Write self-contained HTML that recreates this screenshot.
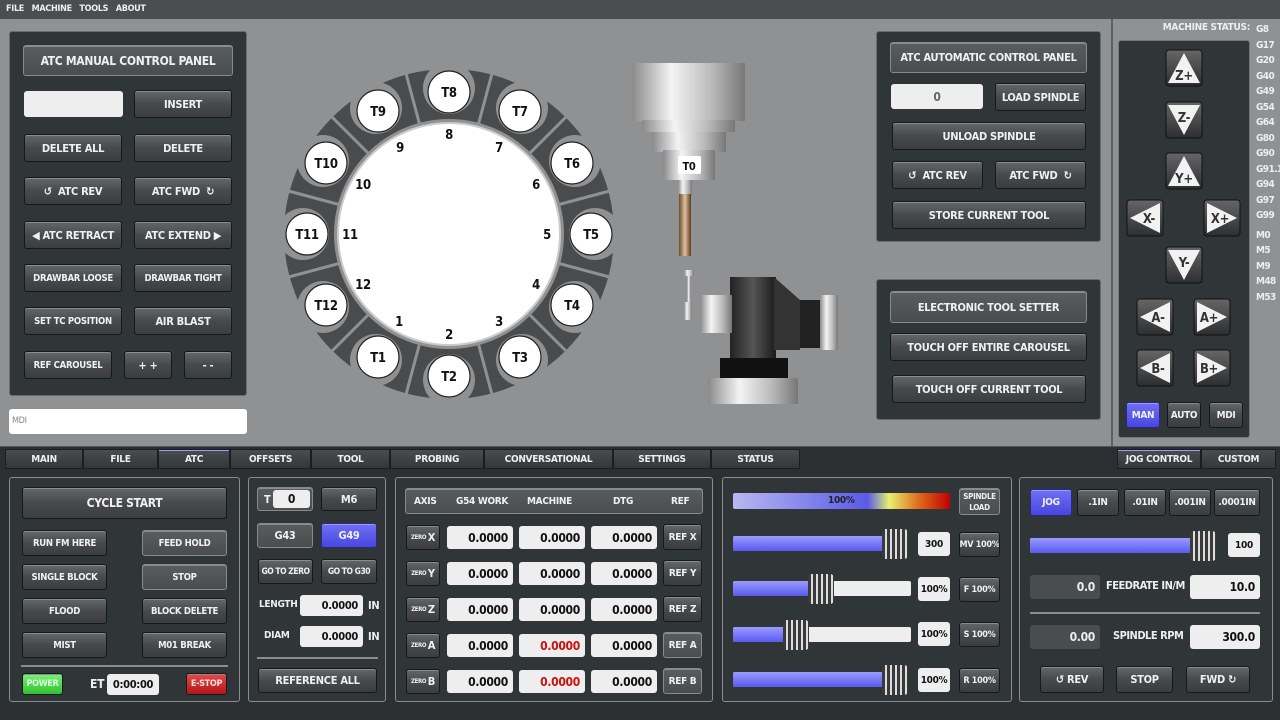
<!DOCTYPE html>
<html><head><meta charset="utf-8"><style>
*{box-sizing:border-box;margin:0;padding:0}
body{width:1280px;height:720px;position:relative;overflow:hidden;background:#8f9192;font-family:"DejaVu Sans Condensed","Liberation Sans Narrow","Liberation Sans",sans-serif;font-weight:bold;color:#eee;letter-spacing:-0.3px}
.a{position:absolute}
.b{position:absolute;background:linear-gradient(#646769,#47494b 50%,#3b3d3f);border:1px solid #161819;border-radius:3px;color:#f0f0f0;display:flex;align-items:center;justify-content:center;font-size:11px;box-shadow:inset 0 1px 0 #8a8c8e;white-space:nowrap;overflow:hidden}
.t{background:linear-gradient(#5a5d5f,#4a4c4e);border:1px solid #888b8d}
.bl{background:linear-gradient(#6f6ff5,#4747e0);border-color:#2a2a80;box-shadow:inset 0 1px 0 #9a9aff}
.p{position:absolute;background:#303537;border:1px solid #6a6d6f;border-radius:3px}
.i{position:absolute;background:#eeeeee;border-radius:3px;color:#111;display:flex;align-items:center;justify-content:flex-end;padding-right:5px;font-size:12px}
.d{position:absolute;background:#4a4d4f;border-radius:3px;color:#eee;display:flex;align-items:center;justify-content:flex-end;padding-right:5px;font-size:12px}
.l{position:absolute;font-size:11px;color:#eee;white-space:nowrap}
.tab{position:absolute;top:449px;height:20px;background:linear-gradient(#4a4d4f,#34373a);border:1px solid #1b1d1e;color:#eee;font-size:10px;display:flex;align-items:center;justify-content:center}
.tr{position:absolute;height:15px;background:#eee;border-radius:2px;overflow:hidden}
.tr i{position:absolute;left:0;top:0;bottom:0;background:linear-gradient(#9a9aff,#5a5af0)}
.h{position:absolute;height:30px;width:26px;background:repeating-linear-gradient(90deg,#3a3a3a 0 3px,#ddd 3px 5px);border-radius:4px}
.s{font-size:9.5px}
</style></head><body>
<div class="a" style="left:0;top:0;width:1280px;height:19px;background:#4b4e50"></div>
<div class="l" style="left:6px;top:4px;font-size:9px">FILE&nbsp;&nbsp; MACHINE&nbsp;&nbsp; TOOLS&nbsp;&nbsp; ABOUT</div>
<div class="a" style="left:1111px;top:19px;width:2px;height:427px;background:#5d6062"></div>

<div class="p" style="left:9px;top:31px;width:238px;height:365px"></div>
<div class="b t" style="left:23px;top:45px;width:210px;height:31px;font-size:12px">ATC MANUAL CONTROL PANEL</div>
<div class="i" style="left:24px;top:91px;width:99px;height:26px"></div>
<div class="b" style="left:134px;top:90px;width:98px;height:28px">INSERT</div>
<div class="b" style="left:24px;top:134px;width:98px;height:28px">DELETE ALL</div>
<div class="b" style="left:134px;top:134px;width:98px;height:28px">DELETE</div>
<div class="b" style="left:24px;top:177px;width:98px;height:28px">↺&nbsp; ATC REV</div>
<div class="b" style="left:134px;top:177px;width:98px;height:28px">ATC FWD&nbsp; ↻</div>
<div class="b" style="left:24px;top:221px;width:98px;height:28px">◀&nbsp;ATC RETRACT</div>
<div class="b" style="left:134px;top:221px;width:98px;height:28px">ATC EXTEND&nbsp;▶</div>
<div class="b s" style="left:24px;top:264px;width:98px;height:28px">DRAWBAR LOOSE</div>
<div class="b s" style="left:134px;top:264px;width:98px;height:28px">DRAWBAR TIGHT</div>
<div class="b s" style="left:24px;top:307px;width:98px;height:28px">SET TC POSITION</div>
<div class="b" style="left:134px;top:307px;width:98px;height:28px">AIR BLAST</div>
<div class="b s" style="left:24px;top:351px;width:88px;height:28px">REF CAROUSEL</div>
<div class="b" style="left:124px;top:351px;width:48px;height:28px">+ +</div>
<div class="b" style="left:184px;top:351px;width:48px;height:28px">- -</div>
<div class="a" style="left:9px;top:409px;width:238px;height:25px;background:#fff;border-radius:3px;color:#888;font-size:9px;padding:7px 3px;font-weight:normal">MDI</div>

<svg class="a" style="left:0;top:0" width="860" height="446" font-family="DejaVu Sans Condensed,Liberation Sans,sans-serif" font-weight="bold">
<circle cx="449" cy="234" r="140" fill="none" stroke="#4a4b4c" stroke-width="50"/>
<g stroke="#8f9192" stroke-width="3">
<line x1="449" y1="234" x2="449" y2="65" transform="rotate(15 449 234)"/><line x1="449" y1="234" x2="449" y2="65" transform="rotate(45 449 234)"/><line x1="449" y1="234" x2="449" y2="65" transform="rotate(75 449 234)"/><line x1="449" y1="234" x2="449" y2="65" transform="rotate(105 449 234)"/><line x1="449" y1="234" x2="449" y2="65" transform="rotate(135 449 234)"/><line x1="449" y1="234" x2="449" y2="65" transform="rotate(165 449 234)"/><line x1="449" y1="234" x2="449" y2="65" transform="rotate(195 449 234)"/><line x1="449" y1="234" x2="449" y2="65" transform="rotate(225 449 234)"/><line x1="449" y1="234" x2="449" y2="65" transform="rotate(255 449 234)"/><line x1="449" y1="234" x2="449" y2="65" transform="rotate(285 449 234)"/><line x1="449" y1="234" x2="449" y2="65" transform="rotate(315 449 234)"/><line x1="449" y1="234" x2="449" y2="65" transform="rotate(345 449 234)"/>
</g>
<circle cx="449" cy="234" r="111" fill="#fff" stroke="#ccc" stroke-width="2"/>
<g fill="#8f9192">
<circle cx="449" cy="88" r="26"/><circle cx="522" cy="108" r="26"/><circle cx="575" cy="161" r="26"/><circle cx="595" cy="234" r="26"/><circle cx="575" cy="307" r="26"/><circle cx="522" cy="360" r="26"/><circle cx="449" cy="380" r="26"/><circle cx="376" cy="360" r="26"/><circle cx="323" cy="307" r="26"/><circle cx="303" cy="234" r="26"/><circle cx="323" cy="161" r="26"/><circle cx="376" cy="108" r="26"/>
</g>
<g fill="#fff" stroke="#222" stroke-width="1.2">
<circle cx="449" cy="92" r="21"/><circle cx="520" cy="111" r="21"/><circle cx="572" cy="163" r="21"/><circle cx="591" cy="234" r="21"/><circle cx="572" cy="305" r="21"/><circle cx="520" cy="357" r="21"/><circle cx="449" cy="376" r="21"/><circle cx="378" cy="357" r="21"/><circle cx="326" cy="305" r="21"/><circle cx="307" cy="234" r="21"/><circle cx="326" cy="163" r="21"/><circle cx="378" cy="111" r="21"/>
</g>
<g font-size="13" text-anchor="middle" fill="#111">
<text x="449" y="97">T8</text><text x="520" y="116">T7</text><text x="572" y="168">T6</text><text x="591" y="239">T5</text><text x="572" y="310">T4</text><text x="520" y="362">T3</text><text x="449" y="381">T2</text><text x="378" y="362">T1</text><text x="326" y="310">T12</text><text x="307" y="239">T11</text><text x="326" y="168">T10</text><text x="378" y="116">T9</text>
<text x="449" y="139">8</text><text x="499" y="152">7</text><text x="536" y="189">6</text><text x="547" y="239">5</text><text x="536" y="289">4</text><text x="499" y="326">3</text><text x="449" y="339">2</text><text x="399" y="326">1</text><text x="363" y="289">12</text><text x="350" y="239">11</text><text x="363" y="189">10</text><text x="400" y="152">9</text>
</g>
<defs><linearGradient id="s" x1="0" x2="1"><stop offset="0" stop-color="#8a8a8a"/><stop offset=".35" stop-color="#f4f4f4"/><stop offset=".7" stop-color="#bbb"/><stop offset="1" stop-color="#777"/></linearGradient>
<linearGradient id="k" x1="0" x2="1"><stop offset="0" stop-color="#222"/><stop offset=".5" stop-color="#555"/><stop offset="1" stop-color="#1a1a1a"/></linearGradient>
<linearGradient id="c" x1="0" x2="1"><stop offset="0" stop-color="#6b4a30"/><stop offset=".5" stop-color="#e0c0a0"/><stop offset="1" stop-color="#5a3a20"/></linearGradient></defs>
<rect x="632" y="63" width="113" height="58" fill="url(#s)"/>
<rect x="642" y="120" width="93" height="12" fill="url(#s)"/>
<rect x="652" y="132" width="74" height="20" fill="url(#s)"/>
<rect x="663" y="150" width="52" height="30" fill="url(#s)"/>
<rect x="678" y="156" width="23" height="18" fill="#fff" rx="2"/>
<text x="689" y="170" font-size="11" text-anchor="middle" fill="#111">T0</text>
<rect x="678" y="180" width="14" height="16" fill="url(#s)"/>
<rect x="679" y="194" width="12" height="62" fill="url(#c)"/>
<rect x="684" y="270" width="10" height="6" fill="url(#s)"/><rect x="687" y="276" width="4" height="42" fill="url(#s)"/><rect x="684" y="302" width="8" height="18" fill="url(#s)"/>
<rect x="730" y="277" width="46" height="100" fill="url(#k)"/>
<polygon points="774,277 800,300 800,350 774,350" fill="#333"/>
<rect x="700" y="295" width="32" height="38" fill="url(#s)"/>
<rect x="800" y="300" width="22" height="48" fill="#222"/>
<rect x="820" y="295" width="18" height="55" fill="url(#s)"/>
<rect x="720" y="358" width="68" height="20" fill="#111"/>
<rect x="708" y="378" width="90" height="26" fill="url(#s)"/>
</svg>

<div class="p" style="left:876px;top:31px;width:225px;height:211px"></div>
<div class="b t" style="left:890px;top:42px;width:197px;height:31px">ATC AUTOMATIC CONTROL PANEL</div>
<div class="i" style="left:891px;top:84px;width:92px;height:25px;justify-content:center;padding:0;color:#666">0</div>
<div class="b" style="left:995px;top:83px;width:91px;height:28px">LOAD SPINDLE</div>
<div class="b" style="left:892px;top:122px;width:194px;height:28px">UNLOAD SPINDLE</div>
<div class="b" style="left:892px;top:161px;width:91px;height:28px">↺&nbsp; ATC REV</div>
<div class="b" style="left:995px;top:161px;width:91px;height:28px">ATC FWD&nbsp; ↻</div>
<div class="b" style="left:892px;top:201px;width:194px;height:28px">STORE CURRENT TOOL</div>
<div class="p" style="left:876px;top:279px;width:225px;height:141px"></div>
<div class="b t" style="left:890px;top:291px;width:197px;height:32px">ELECTRONIC TOOL SETTER</div>
<div class="b" style="left:890px;top:333px;width:197px;height:28px">TOUCH OFF ENTIRE CAROUSEL</div>
<div class="b" style="left:892px;top:375px;width:194px;height:28px">TOUCH OFF CURRENT TOOL</div>

<div class="l" style="left:1150px;top:22px;width:100px;text-align:right;font-size:10px">MACHINE STATUS:</div>
<div class="l" style="left:1256px;top:22px;font-size:10px;line-height:15.5px;letter-spacing:-0.6px">G8<br>G17<br>G20<br>G40<br>G49<br>G54<br>G64<br>G80<br>G90<br>G91.1<br>G94<br>G97<br>G99<br><span style="display:block;height:4px"></span>M0<br>M5<br>M9<br>M48<br>M53</div>
<div class="p" style="left:1118px;top:40px;width:132px;height:398px;border-color:#777"></div>
<svg class="a" style="left:1118px;top:40px" width="132" height="398" font-family="DejaVu Sans Condensed,Liberation Sans,sans-serif" font-weight="bold" font-size="13">
<defs><linearGradient id="g" x1="0" y1="0" x2="0" y2="1"><stop offset="0" stop-color="#666"/><stop offset="1" stop-color="#2c2e30"/></linearGradient></defs>
<g stroke="#111" fill="url(#g)">
<rect x="48" y="10" width="36" height="36" rx="3"/><rect x="48" y="62" width="36" height="36" rx="3"/><rect x="48" y="113" width="36" height="36" rx="3"/>
<rect x="9" y="160" width="36" height="36" rx="3"/><rect x="86" y="160" width="36" height="36" rx="3"/><rect x="48" y="207" width="36" height="36" rx="3"/>
<rect x="19" y="259" width="36" height="36" rx="3"/><rect x="76" y="259" width="36" height="36" rx="3"/><rect x="19" y="310" width="36" height="36" rx="3"/><rect x="76" y="310" width="36" height="36" rx="3"/>
</g>
<g fill="#f2f2f2">
<polygon points="66,13 82,43 50,43"/><polygon points="50,65 82,65 66,95"/><polygon points="66,116 82,146 50,146"/>
<polygon points="12,178 42,163 42,193"/><polygon points="89,163 119,178 89,193"/><polygon points="50,210 82,210 66,240"/>
<polygon points="22,277 52,262 52,292"/><polygon points="79,262 109,277 79,292"/><polygon points="22,328 52,313 52,343"/><polygon points="79,313 109,328 79,343"/>
</g>
<g fill="#333" text-anchor="middle">
<text x="66" y="40">Z+</text><text x="66" y="82">Z-</text><text x="66" y="143">Y+</text><text x="31" y="183">X-</text><text x="102" y="183">X+</text><text x="66" y="227">Y-</text>
<text x="40" y="282">A-</text><text x="91" y="282">A+</text><text x="40" y="333">B-</text><text x="91" y="333">B+</text>
</g></svg>
<div class="b bl" style="left:1126px;top:402px;width:34px;height:26px;font-size:10px">MAN</div>
<div class="b" style="left:1167px;top:402px;width:34px;height:26px;font-size:10px">AUTO</div>
<div class="b" style="left:1209px;top:402px;width:34px;height:26px;font-size:10px">MDI</div>

<div class="a" style="left:0;top:446px;width:1280px;height:274px;background:#2c3032;border-top:1px solid #555"></div>
<div class="tab" style="left:5px;width:78px">MAIN</div>
<div class="tab" style="left:83px;width:75px">FILE</div>
<div class="tab bl" style="left:158px;width:72px">ATC</div>
<div class="tab" style="left:230px;width:81px">OFFSETS</div>
<div class="tab" style="left:311px;width:79px">TOOL</div>
<div class="tab" style="left:390px;width:94px">PROBING</div>
<div class="tab" style="left:484px;width:129px">CONVERSATIONAL</div>
<div class="tab" style="left:613px;width:98px">SETTINGS</div>
<div class="tab" style="left:711px;width:89px">STATUS</div>
<div class="tab bl" style="left:1117px;width:84px">JOG CONTROL</div>
<div class="tab" style="left:1201px;width:75px">CUSTOM</div>

<div class="p" style="left:9px;top:477px;width:231px;height:225px;border-color:#8a8d8f"></div>
<div class="b" style="left:22px;top:487px;width:205px;height:32px;font-size:12px">CYCLE START</div>
<div class="b s" style="left:22px;top:530px;width:85px;height:26px">RUN FM HERE</div>
<div class="b t s" style="left:142px;top:530px;width:85px;height:26px">FEED HOLD</div>
<div class="b s" style="left:22px;top:564px;width:85px;height:26px">SINGLE BLOCK</div>
<div class="b t s" style="left:142px;top:564px;width:85px;height:26px">STOP</div>
<div class="b s" style="left:22px;top:598px;width:85px;height:26px">FLOOD</div>
<div class="b s" style="left:142px;top:598px;width:85px;height:26px">BLOCK DELETE</div>
<div class="b s" style="left:22px;top:632px;width:85px;height:26px">MIST</div>
<div class="b s" style="left:142px;top:632px;width:85px;height:26px">M01 BREAK</div>
<div class="a" style="left:21px;top:665px;width:207px;height:2px;background:#8a8d8f"></div>
<div class="b" style="left:22px;top:673px;width:41px;height:22px;background:linear-gradient(#7af27a,#2fc02f);color:#d8ffd8;font-size:9px">POWER</div>
<div class="l" style="left:90px;top:677px;font-size:12px">ET</div>
<div class="i" style="left:107px;top:674px;width:52px;height:21px;justify-content:center;padding:0;font-size:11px">0:00:00</div>
<div class="b" style="left:186px;top:673px;width:41px;height:22px;background:linear-gradient(#e84848,#b01818);color:#fdd;font-size:9px">E-STOP</div>

<div class="p" style="left:248px;top:477px;width:138px;height:225px;border-color:#8a8d8f"></div>
<div class="b t" style="left:257px;top:487px;width:56px;height:24px;justify-content:flex-start;padding-left:6px">T</div>
<div class="i" style="left:273px;top:490px;width:37px;height:18px;justify-content:center;padding:0">0</div>
<div class="b" style="left:321px;top:487px;width:56px;height:24px">M6</div>
<div class="b t" style="left:257px;top:523px;width:56px;height:25px">G43</div>
<div class="b bl" style="left:321px;top:523px;width:56px;height:25px">G49</div>
<div class="b" style="left:258px;top:559px;width:55px;height:25px;font-size:8.5px;letter-spacing:-0.5px">GO TO ZERO</div>
<div class="b" style="left:321px;top:559px;width:56px;height:25px;font-size:8.5px;letter-spacing:-0.5px">GO TO G30</div>
<div class="l" style="left:259px;top:599px;font-size:10px">LENGTH</div>
<div class="i" style="left:300px;top:595px;width:63px;height:21px;font-size:11px">0.0000</div>
<div class="l" style="left:368px;top:599px">IN</div>
<div class="l" style="left:264px;top:630px;font-size:10px">DIAM</div>
<div class="i" style="left:300px;top:626px;width:63px;height:21px;font-size:11px">0.0000</div>
<div class="l" style="left:368px;top:630px">IN</div>
<div class="a" style="left:257px;top:657px;width:121px;height:2px;background:#8a8d8f"></div>
<div class="b" style="left:258px;top:668px;width:119px;height:25px">REFERENCE ALL</div>

<div class="p" style="left:395px;top:477px;width:318px;height:225px;border-color:#8a8d8f"></div>
<div class="b t" style="left:405px;top:488px;width:298px;height:26px;font-size:10px"><span style="position:absolute;left:8px">AXIS</span><span style="position:absolute;left:50px">G54 WORK</span><span style="position:absolute;left:121px">MACHINE</span><span style="position:absolute;left:207px">DTG</span><span style="position:absolute;left:265px">REF</span></div>
<div class="b" style="left:406px;top:525px;width:34px;height:25px"><span style="font-size:6px">ZERO&nbsp;</span>X</div>
<div class="b" style="left:406px;top:561px;width:34px;height:25px"><span style="font-size:6px">ZERO&nbsp;</span>Y</div>
<div class="b" style="left:406px;top:597px;width:34px;height:25px"><span style="font-size:6px">ZERO&nbsp;</span>Z</div>
<div class="b" style="left:406px;top:633px;width:34px;height:25px"><span style="font-size:6px">ZERO&nbsp;</span>A</div>
<div class="b" style="left:406px;top:669px;width:34px;height:25px"><span style="font-size:6px">ZERO&nbsp;</span>B</div>
<div class="i" style="left:447px;top:526px;width:66px;height:23px">0.0000</div><div class="i" style="left:519px;top:526px;width:66px;height:23px">0.0000</div><div class="i" style="left:591px;top:526px;width:66px;height:23px">0.0000</div>
<div class="i" style="left:447px;top:562px;width:66px;height:23px">0.0000</div><div class="i" style="left:519px;top:562px;width:66px;height:23px">0.0000</div><div class="i" style="left:591px;top:562px;width:66px;height:23px">0.0000</div>
<div class="i" style="left:447px;top:598px;width:66px;height:23px">0.0000</div><div class="i" style="left:519px;top:598px;width:66px;height:23px">0.0000</div><div class="i" style="left:591px;top:598px;width:66px;height:23px">0.0000</div>
<div class="i" style="left:447px;top:634px;width:66px;height:23px">0.0000</div><div class="i" style="left:519px;top:634px;width:66px;height:23px;color:#d01010">0.0000</div><div class="i" style="left:591px;top:634px;width:66px;height:23px">0.0000</div>
<div class="i" style="left:447px;top:670px;width:66px;height:23px">0.0000</div><div class="i" style="left:519px;top:670px;width:66px;height:23px;color:#d01010">0.0000</div><div class="i" style="left:591px;top:670px;width:66px;height:23px">0.0000</div>
<div class="b" style="left:663px;top:524px;width:39px;height:26px;font-size:10px">REF X</div>
<div class="b" style="left:663px;top:560px;width:39px;height:26px;font-size:10px">REF Y</div>
<div class="b" style="left:663px;top:596px;width:39px;height:26px;font-size:10px">REF Z</div>
<div class="b t" style="left:663px;top:632px;width:39px;height:26px;font-size:10px">REF A</div>
<div class="b t" style="left:663px;top:668px;width:39px;height:26px;font-size:10px">REF B</div>

<div class="p" style="left:722px;top:477px;width:290px;height:225px;border-color:#8a8d8f"></div>
<div class="a" style="left:733px;top:493px;width:217px;height:16px;border-radius:2px;background:linear-gradient(90deg,#b8b8f0,#5a5ae8 62%,#e8f070 72%,#e07020 85%,#c00000);color:#222;font-size:10px;text-align:center;line-height:16px;padding-right:0;text-indent:-2px"><span style="position:absolute;left:97px">100%</span></div>
<div class="b t" style="left:959px;top:488px;width:41px;height:27px;font-size:8px;line-height:11px;text-align:center">SPINDLE<br>LOAD</div>
<div class="tr" style="left:733px;top:536px;width:165px"><i style="width:150px"></i></div><div class="h" style="left:882px;top:529px"></div>
<div class="tr" style="left:733px;top:581px;width:178px"><i style="width:75px"></i></div><div class="h" style="left:808px;top:574px"></div>
<div class="tr" style="left:733px;top:627px;width:178px"><i style="width:52px"></i></div><div class="h" style="left:783px;top:620px"></div>
<div class="tr" style="left:733px;top:672px;width:165px"><i style="width:150px"></i></div><div class="h" style="left:882px;top:665px"></div>
<div class="i" style="left:918px;top:532px;width:32px;height:24px;justify-content:center;padding:0;font-size:10px">300</div>
<div class="i" style="left:918px;top:577px;width:32px;height:24px;justify-content:center;padding:0;font-size:10px">100%</div>
<div class="i" style="left:918px;top:622px;width:32px;height:24px;justify-content:center;padding:0;font-size:10px">100%</div>
<div class="i" style="left:918px;top:668px;width:32px;height:24px;justify-content:center;padding:0;font-size:10px">100%</div>
<div class="b" style="left:959px;top:532px;width:41px;height:25px;font-size:9px">MV 100%</div>
<div class="b" style="left:959px;top:577px;width:41px;height:25px;font-size:9px">F 100%</div>
<div class="b" style="left:959px;top:622px;width:41px;height:25px;font-size:9px">S 100%</div>
<div class="b" style="left:959px;top:668px;width:41px;height:25px;font-size:9px">R 100%</div>

<div class="p" style="left:1019px;top:477px;width:254px;height:225px;border-color:#8a8d8f"></div>
<div class="b bl" style="left:1030px;top:489px;width:42px;height:27px;font-size:10px">JOG</div>
<div class="b" style="left:1077px;top:489px;width:42px;height:27px;font-size:10px">.1IN</div>
<div class="b" style="left:1124px;top:489px;width:42px;height:27px;font-size:10px">.01IN</div>
<div class="b" style="left:1169px;top:489px;width:42px;height:27px;font-size:10px">.001IN</div>
<div class="b" style="left:1214px;top:489px;width:46px;height:27px;font-size:10px">.0001IN</div>
<div class="tr" style="left:1030px;top:538px;width:175px"><i style="width:165px"></i></div><div class="h" style="left:1190px;top:531px"></div>
<div class="i" style="left:1228px;top:533px;width:32px;height:24px;justify-content:center;padding:0;font-size:10px">100</div>
<div class="d" style="left:1030px;top:575px;width:70px;height:24px">0.0</div>
<div class="l" style="left:1106px;top:579px;font-size:11px;letter-spacing:-0.5px">FEEDRATE IN/M</div>
<div class="i" style="left:1190px;top:575px;width:70px;height:24px">10.0</div>
<div class="a" style="left:1030px;top:612px;width:230px;height:2px;background:#8a8d8f"></div>
<div class="d" style="left:1030px;top:625px;width:70px;height:24px">0.00</div>
<div class="l" style="left:1113px;top:629px;font-size:11px;letter-spacing:-0.5px">SPINDLE RPM</div>
<div class="i" style="left:1190px;top:625px;width:70px;height:24px">300.0</div>
<div class="b" style="left:1040px;top:666px;width:64px;height:27px">↺ REV</div>
<div class="b" style="left:1116px;top:666px;width:57px;height:27px">STOP</div>
<div class="b" style="left:1186px;top:666px;width:64px;height:27px">FWD ↻</div>
</body></html>
